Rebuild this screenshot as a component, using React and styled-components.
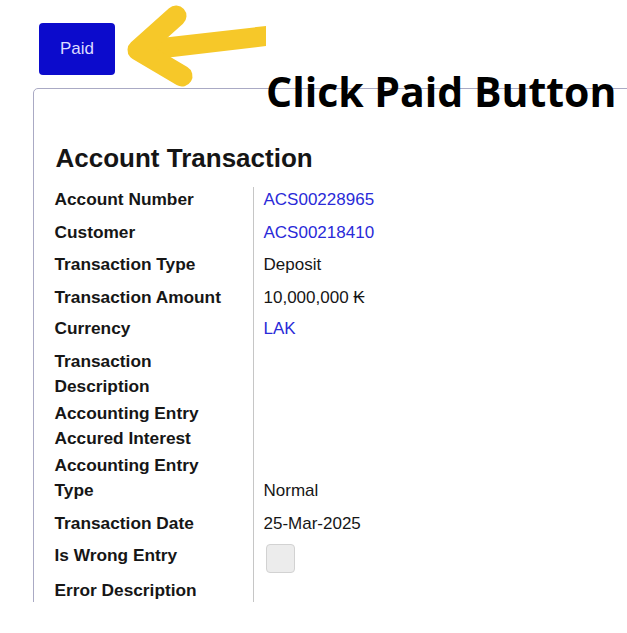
import React from 'react';
import styled, { createGlobalStyle } from 'styled-components';

const GlobalStyle = createGlobalStyle`
  html, body {
    margin: 0;
    padding: 0;
    background: #ffffff;
    overflow: hidden;
  }
  body {
    font-family: "Liberation Sans", Arial, sans-serif;
    color: #141414;
  }
`;

const Viewport = styled.div`
  position: relative;
  width: 627px;
  height: 602px;
  overflow: hidden;
`;

const Toolbar = styled.div`
  display: flex;
  padding: 23px 0 0 39px;
`;

const PaidButton = styled.button`
  width: 76px;
  height: 52px;
  border: none;
  border-radius: 4px;
  background: #0c0bcc;
  color: #dcdcff;
  font-family: "Liberation Sans", Arial, sans-serif;
  font-size: 17px;
  padding: 0;
  cursor: pointer;
`;

const Panel = styled.section`
  width: 720px;
  margin: 13px 0 0 32.5px;
  padding: 54px 0 0 21px;
  min-height: 600px;
  border: 1.5px solid #aaaac4;
  border-radius: 5px;
  box-sizing: border-box;
`;

const Title = styled.h2`
  margin: 0 0 14px 1px;
  font-size: 26px;
  line-height: 30px;
  font-weight: 700;
  color: #151515;
`;

const DetailGrid = styled.div`
  display: grid;
  grid-template-columns: 198px 1fr;
  font-size: 17px;
  line-height: 25px;
`;

const Label = styled.div`
  padding-top: ${p => p.$space}px;
  font-size: 17.3px;
  font-weight: 700;
  color: #161616;
`;

const Value = styled.div`
  display: flex;
  flex-direction: column;
  justify-content: flex-end;
  align-items: flex-start;
  padding: ${p => p.$space}px 0 0 10px;
  border-left: 1.5px solid #c6c6c6;
  color: ${p => (p.$link ? '#2a2ad8' : '#161616')};
`;

const CheckBox = styled.span`
  display: block;
  width: 27px;
  height: 27px;
  margin: 1px 0 0 2px;
  border: 1px solid #d2d2d2;
  border-radius: 4px;
  background: #ececec;
`;

const Arrow = styled.svg`
  position: absolute;
  left: 0;
  top: 0;
`;

const Callout = styled.div`
  position: absolute;
  left: 266px;
  top: 71px;
  font-family: "Open Sans", "Noto Sans", sans-serif;
  font-weight: 700;
  font-size: 41px;
  line-height: 1;
  color: #000000;
  white-space: nowrap;
`;

const rows = [
  { label: 'Account Number', value: 'ACS00228965', link: true, space: 0 },
  { label: 'Customer', value: 'ACS00218410', link: true, space: 8 },
  { label: 'Transaction Type', value: 'Deposit', space: 7 },
  { label: 'Transaction Amount', value: '10,000,000 \u20AD', space: 8 },
  { label: 'Currency', value: 'LAK', link: true, space: 6 },
  { label: ['Transaction', 'Description'], value: '', space: 8 },
  { label: ['Accounting Entry', 'Accured Interest'], value: '', space: 2 },
  { label: ['Accounting Entry', 'Type'], value: 'Normal', space: 2 },
  { label: 'Transaction Date', value: '25-Mar-2025', space: 8 },
  { label: 'Is Wrong Entry', check: true, space: 7 },
  { label: 'Error Description', value: '', space: 5 },
];

export default function App() {
  return (
    <Viewport>
      <GlobalStyle />
      <Toolbar>
        <PaidButton>Paid</PaidButton>
      </Toolbar>
      <Panel>
        <Title>Account Transaction</Title>
        <DetailGrid>
          {rows.map((r, i) => (
            <React.Fragment key={i}>
              <Label $space={r.space}>
                {Array.isArray(r.label)
                  ? r.label.map(l => <div key={l}>{l}</div>)
                  : r.label}
              </Label>
              <Value $space={r.space} $link={r.link}>
                {r.check ? <CheckBox /> : r.value}
              </Value>
            </React.Fragment>
          ))}
        </DetailGrid>
      </Panel>
      <Arrow width="280" height="100" viewBox="0 0 280 100">
        <polygon points="139,40.5 266,26 266,46 139,61" fill="#f6c829" />
        <polyline
          points="176,16 138,50 182,76"
          fill="none"
          stroke="#f6c829"
          strokeWidth="21"
          strokeLinecap="round"
          strokeLinejoin="round"
        />
      </Arrow>
      <Callout>Click Paid Button</Callout>
    </Viewport>
  );
}
